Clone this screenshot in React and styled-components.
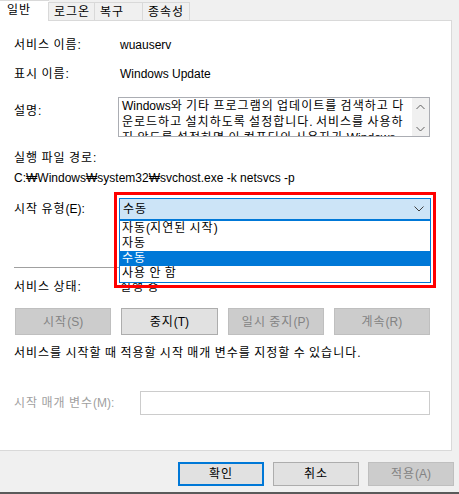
import React from "react";
import styled, { createGlobalStyle } from "styled-components";

const Global = createGlobalStyle`
  html, body { margin: 0; padding: 0; background: #f0f0f0; }
  body {
    font-family: "Liberation Sans", "Noto Sans CJK KR", sans-serif;
    font-size: 12px;
    color: #000;
  }
  * { box-sizing: border-box; }
`;

const Hangul = styled.span`
  letter-spacing: 1px;
`;

const HANGUL_RE = /([\u1100-\u11FF\u3130-\u318F\uAC00-\uD7AF]+)/;

function K({ children }) {
  const parts = String(children).split(HANGUL_RE);
  return (
    <span>
      {parts.map((p, i) =>
        i % 2 === 1 ? <Hangul key={i}>{p}</Hangul> : <React.Fragment key={i}>{p}</React.Fragment>
      )}
    </span>
  );
}

const Window = styled.div`
  width: 459px;
  height: 494px;
  display: flex;
  flex-direction: column;
  background: #f0f0f0;
  border-bottom: 2px solid #5a5a5a;
`;

const TabStrip = styled.div`
  width: 452px;
  height: 21px;
  display: flex;
  align-items: flex-end;
`;

const Tab = styled.div`
  height: ${(p) => (p.$active ? "21px" : "19px")};
  width: ${(p) => p.$w}px;
  background: ${(p) => (p.$active ? "#fff" : "#f0f0f0")};
  border: 1px solid #d9d9d9;
  border-bottom-color: ${(p) => (p.$active ? "#fff" : "#d9d9d9")};
  border-left-width: ${(p) => (p.$active ? 0 : 1)}px;
  border-right-width: ${(p) => (p.$active ? 0 : 1)}px;
  margin-left: ${(p) => (p.$first ? 0 : -1)}px;
  padding-left: ${(p) => (p.$active ? 7 : 5)}px;
  padding-top: 1px;
  line-height: 17px;
  white-space: nowrap;
`;

const TabFill = styled.div`
  flex: 1;
  height: 1px;
  background: #d9d9d9;
`;

const Panel = styled.div`
  width: 452px;
  height: 430px;
  background: #fff;
  border-right: 1px solid #d9d9d9;
  border-bottom: 1px solid #d9d9d9;
  padding: 0 21px 0 14px;
  display: flex;
  flex-direction: column;
`;

const Row = styled.div`
  display: grid;
  grid-template-columns: ${(p) => p.$col || 106}px 1fr;
  align-items: ${(p) => p.$align || "center"};
  margin-top: ${(p) => p.$mt || 0}px;
  line-height: 16px;
  position: relative;
`;

const Label = styled.div`
  line-height: 16px;
  white-space: nowrap;
  color: ${(p) => (p.$disabled ? "#a0a0a0" : "#000")};
  padding-top: ${(p) => p.$pt || 0}px;
`;

const Text = styled.div`
  line-height: 16px;
  white-space: nowrap;
  margin-top: ${(p) => p.$mt || 0}px;
`;

const DescBox = styled.div`
  height: 40px;
  border: 1px solid #abadb3;
  display: flex;
  overflow: hidden;
`;

const DescText = styled.div`
  flex: 1;
  padding: 0 6px 0 3px;
  line-height: 16px;
  overflow: hidden;
  word-break: break-all;
`;

const ScrollBar = styled.div`
  width: 17px;
  background: #f0f0f0;
  display: flex;
  flex-direction: column;
  justify-content: space-between;
  align-items: center;
  padding: 6px 0 4px;
`;

const Combo = styled.div`
  position: relative;
  height: 22px;
  width: 312px;
  margin-left: -1px;
  border: 1px solid #0078d7;
  background: #cce4f7;
  display: flex;
  align-items: center;
  justify-content: space-between;
  padding: 0 6px 0 3px;
`;

const DropList = styled.div`
  position: absolute;
  left: -1px;
  top: 21px;
  width: 312px;
  height: 63px;
  background: #fff;
  border: 1px solid #0078d7;
  z-index: 2;
`;

const DropItem = styled.div`
  height: 15px;
  line-height: 15px;
  padding-left: 2px;
  background: ${(p) => (p.$sel ? "#0078d7" : "transparent")};
  color: ${(p) => (p.$sel ? "#fff" : "#000")};
  white-space: nowrap;
`;

const Highlight = styled.div`
  position: absolute;
  left: -6px;
  top: -7px;
  width: 322px;
  height: 96px;
  border: 3px solid #f00;
  z-index: 3;
  pointer-events: none;
`;

const Separator = styled.div`
  height: 1px;
  background: #a0a0a0;
  margin-top: ${(p) => p.$mt}px;
`;

const ButtonRow = styled.div`
  display: grid;
  grid-template-columns: repeat(4, 1fr);
  column-gap: 10px;
  margin: 13px 0 0 1px;
`;

const Button = styled.div`
  height: ${(p) => p.$h || 27}px;
  width: ${(p) => (p.$w ? p.$w + "px" : "auto")};
  background: ${(p) => (p.$disabled ? "#cccccc" : "#e1e1e1")};
  border: ${(p) => (p.$default ? "2px solid #0078d7" : p.$disabled ? "1px solid #bfbfbf" : "1px solid #adadad")};
  color: ${(p) => (p.$disabled ? "#838383" : "#000")};
  display: flex;
  align-items: center;
  justify-content: center;
  white-space: nowrap;
  line-height: 16px;
`;

const Input = styled.div`
  height: 24px;
  border: 1px solid #cccccc;
  background: #fff;
`;

const Footer = styled.div`
  flex: 1;
  display: flex;
  justify-content: flex-end;
  align-items: flex-start;
  gap: 9px;
  padding: 11px 5px 0 0;
`;

const Chevron = ({ up }) => (
  <svg width="9" height="6" viewBox="0 0 9 6">
    <polyline
      points={up ? "0.5,5 4.5,1 8.5,5" : "0.5,1 4.5,5 8.5,1"}
      fill="none"
      stroke="#606060"
      strokeWidth="1"
    />
  </svg>
);

export default function App() {
  return (
    <>
      <Global />
      <Window>
        <TabStrip>
          <Tab $active $first $w={49}><K>일반</K></Tab>
          <Tab $w={47}><K>로그온</K></Tab>
          <Tab $w={49}><K>복구</K></Tab>
          <Tab $w={48}><K>종속성</K></Tab>
          <TabFill />
        </TabStrip>
        <Panel>
          <Row $mt={16}>
            <Label><K>서비스 이름:</K></Label>
            <Text>wuauserv</Text>
          </Row>
          <Row $mt={13}>
            <Label><K>표시 이름:</K></Label>
            <Text>Windows Update</Text>
          </Row>
          <Row $mt={15} $col={104} $align="start">
            <Label $pt={6}><K>설명:</K></Label>
            <DescBox>
              <DescText>
                <K>Windows와 기타 프로그램의 업데이트를 검색하고 다운로드하고 설치하도록 설정합니다. 서비스를 사용하지 않도록 설정하면 이 컴퓨터의 사용자가 Windows Update 또는 자동 업데이트 기능을 사용할 수 없습니다.</K>
              </DescText>
              <ScrollBar>
                <Chevron up />
                <Chevron />
              </ScrollBar>
            </DescBox>
          </Row>
          <Text $mt={13}><K>실행 파일 경로:</K></Text>
          <Text $mt={4}>C:₩Windows₩system32₩svchost.exe -k netsvcs -p</Text>
          <Row $mt={12}>
            <Label><K>시작 유형(E):</K></Label>
            <Combo>
              <K>수동</K>
              <svg width="10" height="6" viewBox="0 0 10 6">
                <polyline points="0.5,0.5 5,5 9.5,0.5" fill="none" stroke="#404040" strokeWidth="1" />
              </svg>
              <DropList>
                <DropItem><K>자동(지연된 시작)</K></DropItem>
                <DropItem><K>자동</K></DropItem>
                <DropItem $sel><K>수동</K></DropItem>
                <DropItem><K>사용 안 함</K></DropItem>
              </DropList>
              <Highlight />
            </Combo>
          </Row>
          <Separator $mt={47} />
          <Row $mt={11}>
            <Label><K>서비스 상태:</K></Label>
            <Text><K>실행 중</K></Text>
          </Row>
          <ButtonRow>
            <Button $disabled><K>시작(S)</K></Button>
            <Button><K>중지(T)</K></Button>
            <Button $disabled><K>일시 중지(P)</K></Button>
            <Button $disabled><K>계속(R)</K></Button>
          </ButtonRow>
          <Text $mt={10}><K>서비스를 시작할 때 적용할 시작 매개 변수를 지정할 수 있습니다.</K></Text>
          <Row $mt={30} $col={126}>
            <Label $disabled><K>시작 매개 변수(M):</K></Label>
            <Input />
          </Row>
        </Panel>
        <Footer>
          <Button $default $h={24} $w={86}><K>확인</K></Button>
          <Button $h={24} $w={86}><K>취소</K></Button>
          <Button $disabled $h={24} $w={86}><K>적용(A)</K></Button>
        </Footer>
      </Window>
    </>
  );
}
